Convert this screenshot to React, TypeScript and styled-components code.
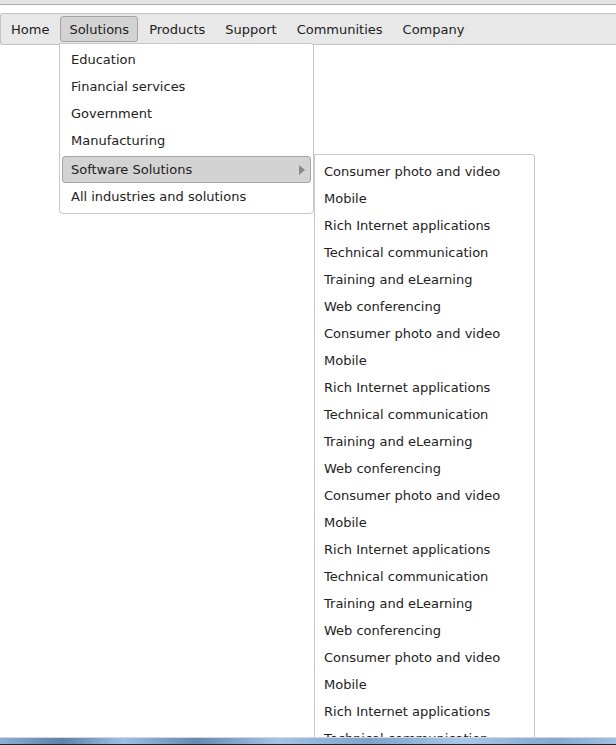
import React from "react";
import styled, { createGlobalStyle } from "styled-components";

const Global = createGlobalStyle`
  html, body { margin: 0; padding: 0; background: #fff; overflow: hidden; height: 745px; }
  body { font-family: "DejaVu Sans", Verdana, sans-serif; font-size: 13px; color: #222; }
`;

const TopStrip = styled.div`
  height: 4px;
  background: #e4e4e4;
  border-bottom: 1px solid #ababab;
`;

const Page = styled.div`
  padding-top: 8px;
`;

const MenuBar = styled.nav`
  position: relative;
  display: flex;
  align-items: center;
  height: 30px;
  padding: 0 0 0 1px;
  background: #e8e8e8;
  border: 1px solid #c3c3c3;
  border-right: none;
  border-radius: 3px 0 0 3px;
`;

const BarItem = styled.div<{ $active?: boolean }>`
  position: relative;
  height: 16px;
  line-height: 16px;
  padding: 5px 8px 3px;
  margin-right: 2px;
  border: 1px solid ${(p) => (p.$active ? "#a4a4a4" : "transparent")};
  border-radius: 3px;
  background: ${(p) => (p.$active ? "#d3d3d3" : "transparent")};
  white-space: nowrap;
`;

const Dropdown = styled.div`
  position: absolute;
  top: 29px;
  left: 58px;
  width: 253px;
  padding: 2px 0 3px;
  background: #fff;
  border: 1px solid #c8c8c8;
  border-radius: 0 3px 4px 4px;
  z-index: 2;
`;

const DropItem = styled.div<{ $active?: boolean }>`
  display: flex;
  align-items: center;
  justify-content: space-between;
  height: 15px;
  line-height: 15px;
  padding: 5px 5px 5px 8px;
  margin: ${(p) => (p.$active ? "2px 2px 0" : "0 2px")};
  border: 1px solid ${(p) => (p.$active ? "#a6a6a6" : "transparent")};
  border-radius: 3px;
  background: ${(p) => (p.$active ? "#d3d3d3" : "transparent")};
  white-space: nowrap;
`;

const Arrow = styled.span`
  width: 0;
  height: 0;
  border-left: 6px solid #8a8a8a;
  border-top: 5px solid transparent;
  border-bottom: 5px solid transparent;
`;

const SubMenu = styled.div`
  position: absolute;
  top: 110px;
  left: 254px;
  width: 219px;
  padding: 3px 0;
  background: #fff;
  border: 1px solid #c8c8c8;
  border-radius: 0 3px 0 0;
  z-index: 3;
`;

const SubItem = styled.div`
  height: 15px;
  line-height: 15px;
  padding: 6px 9px;
  white-space: nowrap;
`;

const Taskbar = styled.div`
  position: fixed;
  left: 0;
  right: 0;
  bottom: 0;
  height: 6px;
  border-top: 1px solid #d4d8dc;
  border-bottom: 1px solid #1b2735;
  background: linear-gradient(
    90deg,
    #8fb0d4 0%,
    #5e80a8 10%,
    #9cc0e4 20%,
    #6788b0 32%,
    #a3c4e6 45%,
    #7fa2ca 60%,
    #a8c7e8 75%,
    #86a8cf 90%,
    #9fc0e2 100%
  );
  z-index: 10;
`;

const barItems = ["Home", "Solutions", "Products", "Support", "Communities", "Company"];
const dropItems = [
  "Education",
  "Financial services",
  "Government",
  "Manufacturing",
  "Software Solutions",
  "All industries and solutions",
];
const subBase = [
  "Consumer photo and video",
  "Mobile",
  "Rich Internet applications",
  "Technical communication",
  "Training and eLearning",
  "Web conferencing",
];
const subItems = [...subBase, ...subBase, ...subBase, ...subBase];

export default function App() {
  return (
    <>
      <Global />
      <TopStrip />
      <Page>
        <MenuBar>
          {barItems.map((b) => (
            <BarItem key={b} $active={b === "Solutions"}>
              {b}
            </BarItem>
          ))}
          <Dropdown>
            {dropItems.map((d) => (
              <DropItem key={d} $active={d === "Software Solutions"}>
                <span>{d}</span>
                {d === "Software Solutions" && <Arrow />}
              </DropItem>
            ))}
            <SubMenu>
              {subItems.map((s, i) => (
                <SubItem key={i}>{s}</SubItem>
              ))}
            </SubMenu>
          </Dropdown>
        </MenuBar>
      </Page>
      <Taskbar />
    </>
  );
}
